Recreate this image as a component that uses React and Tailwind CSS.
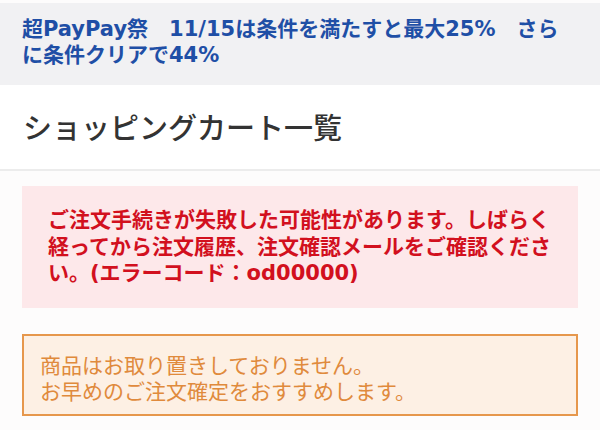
import React from "react";

const font = { fontFamily: '"DejaVu Sans", "Noto Sans CJK JP", sans-serif' };
const jp = { fontFamily: '"Noto Sans CJK JP", "Noto Sans", sans-serif' };

export default function App() {
  return (
    <div className="w-[600px] h-[430px] bg-[#fdfcfc] overflow-hidden" style={font}>
      {/* campaign banner */}
      <div className="mt-[3px] bg-[#f1f1f3] px-[22px] pt-[13px] pb-[17px]">
        <p className="text-[21px] leading-[26px] font-bold text-[#1f4fa6] whitespace-nowrap">
          超PayPay祭　11/15は条件を満たすと最大25%　さら
          <br />
          に条件クリアで44%
        </p>
      </div>

      {/* page title */}
      <div className="bg-white h-[86px] flex items-center px-[23px] border-b-2 border-[#ececec]">
        <h1 className="text-[29px] font-medium text-[#333333]" style={jp}>
          ショッピングカート一覧
        </h1>
      </div>

      <div className="px-[22px] pt-[15px] flex flex-col gap-[26px]">
        {/* error */}
        <div className="bg-[#fde8ea] pl-[26px] pr-[20px] py-[21px]">
          <p className="text-[21px] leading-[26.5px] font-bold text-[#d2101e] whitespace-nowrap">
            ご注文手続きが失敗した可能性があります。しばらく
            <br />
            経ってから注文履歴、注文確認メールをご確認くださ
            <br />
            い。(エラーコード：od00000)
          </p>
        </div>

        {/* notice */}
        <div className="bg-[#fdf0e4] border-2 border-[#e6974c] pl-[16px] pt-[15px] pb-[11px]">
          <p className="text-[21px] leading-[26px] text-[#e08a3c]" style={jp}>
            商品はお取り置きしておりません。
            <br />
            お早めのご注文確定をおすすめします。
          </p>
        </div>
      </div>
    </div>
  );
}
